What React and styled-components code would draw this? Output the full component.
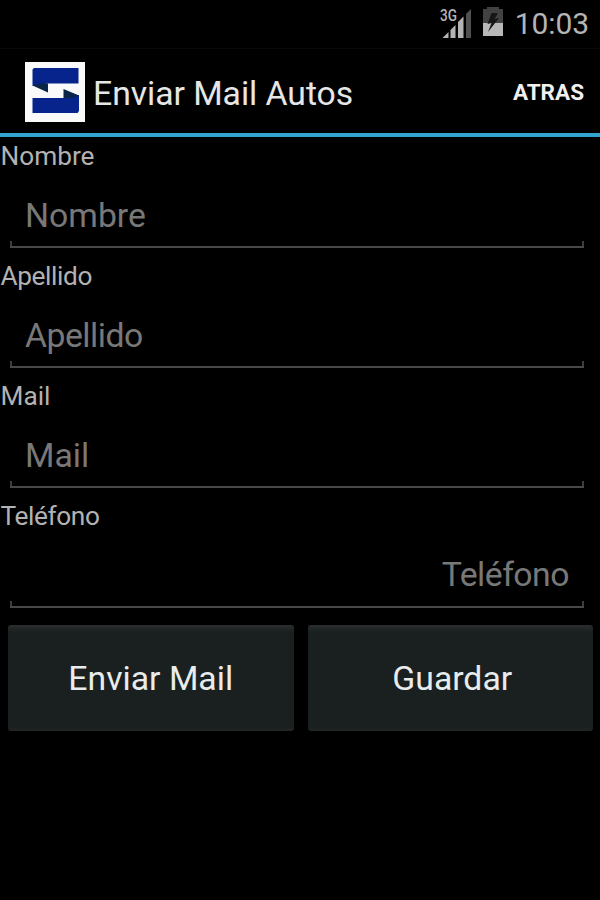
import React, { useState } from 'react';
import styled, { createGlobalStyle } from 'styled-components';

const GlobalStyle = createGlobalStyle`
    * {
        box-sizing: border-box;
    }
    body {
        margin: 0;
        background: #000;
        font-family: Roboto, sans-serif;
    }
`;

const Screen = styled.div`
    display: flex;
    flex-direction: column;
    width: 600px;
    height: 900px;
    overflow: hidden;
    background: #000;
`;

const StatusBar = styled.div`
    display: flex;
    justify-content: flex-end;
    height: 48px;
    padding-right: 11px;
`;

const Clock = styled.span`
    margin-left: 10px;
    color: #b4b4b4;
    font-size: 30px;
    line-height: 48px;
    letter-spacing: -0.1px;
`;

const ActionBar = styled.header`
    display: flex;
    align-items: center;
    height: 89px;
    padding: 1px 16px 0 25px;
    border-top: 1px solid #0a0a0a;
    border-bottom: 4px solid #31a5d2;
`;

const Title = styled.h1`
    flex-grow: 1;
    margin: 4px 0 0 8px;
    color: #e6e6e6;
    font-size: 33.75px;
    font-weight: 400;
    line-height: 40px;
    letter-spacing: -0.05px;
    white-space: nowrap;
`;

const BackButton = styled.button`
    padding: 0;
    border: 0;
    background: none;
    color: #f0f0f0;
    font-family: inherit;
    font-size: 22.5px;
    font-weight: 700;
    line-height: 30px;
`;

const Form = styled.form`
    display: flex;
    flex-direction: column;
`;

const Field = styled.label`
    display: flex;
    flex-direction: column;
    height: 120px;
`;

const FieldName = styled.span`
    height: 38px;
    padding-left: 0.5px;
    color: #b2b2b2;
    font-size: 26.25px;
    line-height: 38px;
    letter-spacing: ${({ $tight }) => ($tight ? '-0.4px' : '0')};
`;

const Input = styled.input`
    height: 63px;
    margin: 10px 16px 0 10px;
    padding: ${({ $numeric }) => ($numeric ? '0 15px 5px' : '0 15px 2px')};
    border: 0;
    border-radius: 0;
    outline: 0;
    background:
        linear-gradient(#484848, #484848) left bottom / 100% 2px no-repeat,
        linear-gradient(#3c3c3c, #3c3c3c) left bottom / 2px 7px no-repeat,
        linear-gradient(#3c3c3c, #3c3c3c) right bottom / 2px 7px no-repeat;
    color: #fff;
    font-family: inherit;
    font-size: 33.75px;
    letter-spacing: ${({ $tight }) => ($tight ? '-0.5px' : '0')};
    text-align: ${({ $numeric }) => ($numeric ? 'right' : 'left')};

    &::placeholder {
        color: #787878;
        opacity: 1;
    }
`;

const Buttons = styled.div`
    display: grid;
    grid-template-columns: 1fr 1fr;
    gap: 14px;
    padding: 8px 7px 0 8px;
`;

const Button = styled.button`
    height: 106px;
    padding: 0 0 0 ${({ $indent }) => $indent || 0}px;
    border: 0;
    border-radius: 3px;
    background: linear-gradient(#2b2e30 0, #202525 4px, #1a201f 8px, #1a201f 102px, #222625 106px);
    color: #e8ecec;
    font-family: inherit;
    font-size: 33.75px;
`;

const SignalIcon = () => (
  <svg width="32" height="48" viewBox="0 0 32 48">
      <text x="0" y="20.500" fill="#b4b4b4" fontFamily="Roboto" fontSize="16" fontWeight="500" textLength="17" lengthAdjust="spacingAndGlyphs">3G</text>
      <path d="M2.500 38 L8.500 32 V38 Z" fill="#b4b4b4" />
      <path d="M10.500 30 L15.500 25 V38 H10.500 Z" fill="#b4b4b4" />
      <path d="M18 22 L23.500 16.500 V38 H18 Z" fill="#b4b4b4" />
      <path d="M26 14 L31 9 V38 H26 Z" fill="#505050" />
  </svg>
);

const BatteryIcon = () => (
  <svg width="33" height="48" viewBox="0 0 33 48">
      <path d="M11 9 H15 V7 H27 V9 H31 V24 H11 Z" fill="#424242" />
      <path d="M11 23 H31 V36 H11 Z" fill="#b8b8b8" />
      <path d="M19.500 13 H26 L22.500 19 L27 18 L16 32 L19.500 23 L15.500 24 Z" fill="#171717" />
  </svg>
);

const Logo = () => (
  <svg width="60" height="60" viewBox="0 0 60 60">
      <path d="M0 0 H60 V60 H0 Z" fill="#fafafa" />
      <path d="M9 6 H53.500 V21.500 H23 L7.500 24 V7.500 Z" fill="#06248c" />
      <path d="M7.500 23.500 L15 21.500 H23 V30.500 Z" fill="#0a2547" />
      <path d="M7.500 36 H38.500 L54 33 V49 L52.500 51 H7.500 Z" fill="#06248c" />
      <path d="M38.500 27 L54 33.500 L48 36 H38.500 Z" fill="#0a2547" />
  </svg>
);

const FIELDS = [
  { name: 'Nombre' },
  { name: 'Apellido', tight: true },
  { name: 'Mail' },
  { name: 'Teléfono', tight: true, numeric: true },
];

const App = () => {

  const [values, setValues] = useState({});

  const handleChange = (name) => (e) => {
      setValues({ ...values, [name]: e.target.value });
  };

  return (
    <Screen>
      <GlobalStyle />
      <StatusBar>
        <SignalIcon />
        <BatteryIcon />
        <Clock>10:03</Clock>
      </StatusBar>
      <ActionBar>
        <Logo />
        <Title>Enviar Mail Autos</Title>
        <BackButton>ATRAS</BackButton>
      </ActionBar>
      <Form>
        {FIELDS.map(({ name, tight, numeric }) => (
          <Field key={name}>
            <FieldName $tight={tight}>{name}</FieldName>
            <Input
                $tight={tight}
                $numeric={numeric}
                placeholder={name}
                value={values[name] || ''}
                onChange={handleChange(name)}
            />
          </Field>
        ))}
        <Buttons>
          <Button type="button">Enviar Mail</Button>
          <Button type="button" $indent={4}>Guardar</Button>
        </Buttons>
      </Form>
    </Screen>
  );
};

export default App;
